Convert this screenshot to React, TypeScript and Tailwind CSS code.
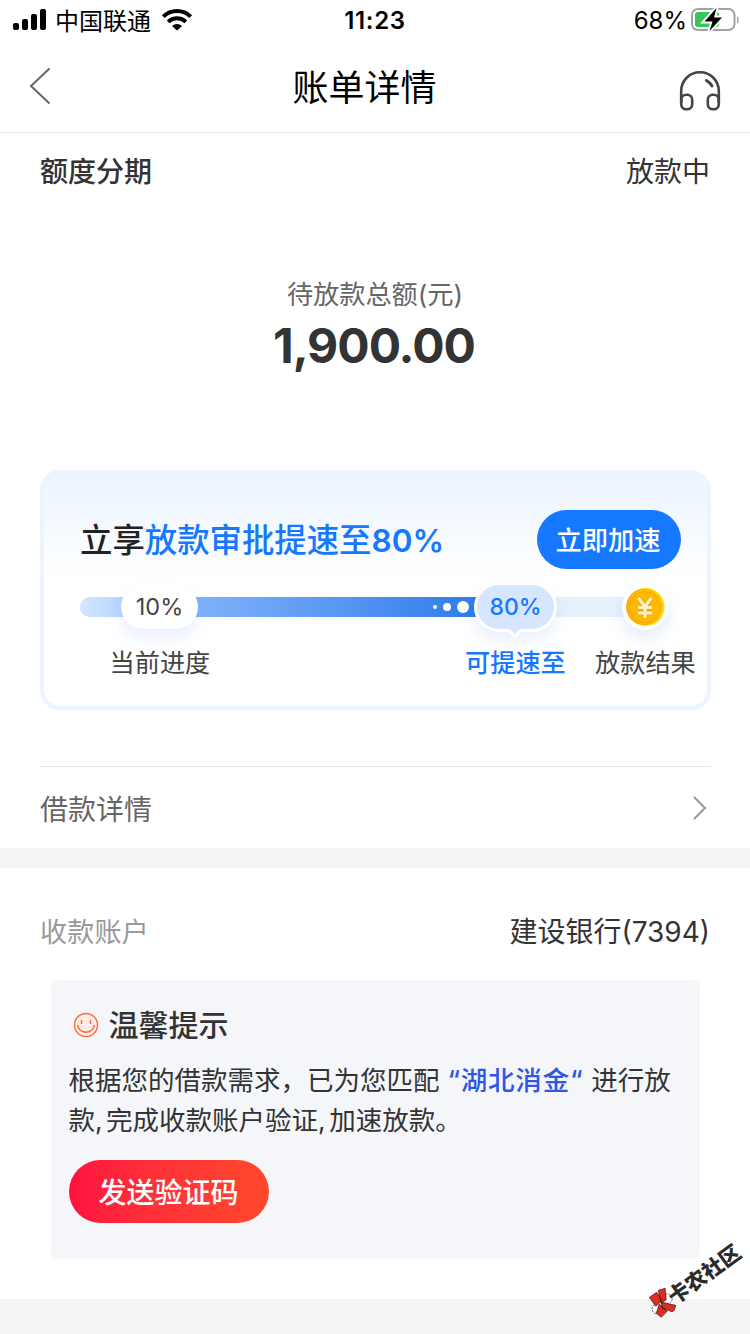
const steps = [
  { label: "当前进度", className: "left-[69.5px] text-[#444]" },
  { label: "可提速至", className: "left-[425px] font-medium text-[#1677ff]" },
  { label: "放款结果", className: "left-[555px] text-[#444]" },
];

function StatusBar() {
  return (
    <div className="flex h-10 items-center justify-between pr-2.5 pl-3 text-2xl leading-10 text-black">
      <div className="flex w-[260px] items-center">
        <svg width="34" height="22" viewBox="0 0 34 22" aria-hidden="true">
          <rect x="1" y="14" width="6" height="7" rx="2" />
          <rect x="10" y="10" width="6" height="11" rx="2" />
          <rect x="19" y="5" width="6" height="16" rx="2" />
          <rect x="28" y="0" width="6" height="21" rx="2" />
        </svg>
        <span className="ml-[9px] pt-1 leading-9">中国联通</span>
        <svg
          className="ml-2.5"
          width="32"
          height="22"
          viewBox="0 0 32 22"
          aria-hidden="true"
        >
          <path
            d="M2.3 7.6a19.5 19.5 0 0 1 27.4 0M7.2 12.9a12.5 12.5 0 0 1 17.6 0"
            fill="none"
            stroke="#000"
            strokeWidth="3.9"
          />
          <path d="M11 17a7.2 7.2 0 0 1 10 0l-5 4.5z" />
        </svg>
      </div>
      <span className="pt-0.5 pr-0.5 leading-[38px] font-semibold tracking-[0.7px]">
        11:23
      </span>
      <div className="flex w-[260px] items-center justify-end">
        <span className="pt-0.5 leading-[38px]">68%</span>
        <svg
          className="ml-1"
          width="49"
          height="28"
          viewBox="0 0 49 28"
          aria-hidden="true"
        >
          <rect
            x="1"
            y="3"
            width="42.5"
            height="21"
            rx="6"
            fill="none"
            stroke="#a3a3a3"
            strokeWidth="2"
          />
          <rect x="4" y="6" width="24" height="15" rx="3" fill="#34c759" />
          <path d="M46 10v8c2.2-1.2 2.2-6.8 0-8z" fill="#a3a3a3" />
          <path
            d="M25.5 2 13.5 15.5h8L18.5 25 31 11.5h-8z"
            stroke="#fff"
            strokeWidth="4"
            paintOrder="stroke"
          />
        </svg>
      </div>
    </div>
  );
}

function NavBar() {
  return (
    <header className="flex h-[93px] items-center border-b border-[#e6e6e6] pr-[27px] pl-7">
      <div className="w-[150px]">
        <svg
          width="44"
          height="40"
          viewBox="0 0 44 40"
          fill="none"
          stroke="#666"
          strokeWidth="2"
          aria-hidden="true"
        >
          <path d="M21.5 2.5 3 20 21.5 37.5" />
        </svg>
      </div>
      <h1 className="flex-1 pt-1 pr-[22px] text-center text-4xl leading-[50px] text-black">
        账单详情
      </h1>
      <div className="flex w-[150px] justify-end">
        <svg
          className="mt-2.5"
          width="46"
          height="44"
          viewBox="0 0 46 44"
          fill="none"
          stroke="#444"
          strokeWidth="2.6"
          strokeLinecap="round"
          aria-hidden="true"
        >
          <path d="M4.2 33V22C4.2 11.5 12.5 3.3 23 3.3S41.8 11.5 41.8 22v11" />
          <rect x="4.2" y="25.8" width="11" height="14.5" rx="5" />
          <rect x="30.8" y="25.8" width="11" height="14.5" rx="5" />
          <path d="M29.5 11.5q3.5 2 5.5 5.5" strokeWidth="3" />
        </svg>
      </div>
    </header>
  );
}

function Coin() {
  return (
    <svg width="40" height="40" viewBox="0 0 40 40" aria-hidden="true">
      <circle cx="20.5" cy="20" r="19" fill="#ffd900" />
      <circle cx="19" cy="20" r="18" fill="#fbaf12" />
      <circle cx="20" cy="19.5" r="16.5" fill="#ffc400" />
      <circle
        cx="20"
        cy="20"
        r="15.5"
        fill="#ffb900"
        stroke="#f8a500"
        strokeWidth="1"
      />
      <path
        d="M13.5 11.5l6.5 8 6.5-8M20 19.5V31M13 21h14M13 26h14"
        fill="none"
        stroke="#f79a10"
        strokeWidth="4.5"
      />
      <path
        d="M13.5 11l6.5 8.5 6.5-8.5M20 19.5V31M13 20.5h14M13 26h14"
        fill="none"
        stroke="#fff1c4"
        strokeWidth="3.2"
      />
    </svg>
  );
}

function Progress() {
  return (
    <div className="relative mt-7 mr-[62px] h-5 rounded-l-full bg-[#e6f1fe]">
      <div className="flex h-5 w-[400px] items-center justify-end gap-1.5 rounded-l-full bg-linear-to-r from-[#d6e6fd] via-[#7fb1fb] via-30% to-[#2b7bea] pr-[11px]">
        <i className="size-1 rounded-full bg-white" />
        <i className="size-2 rounded-full bg-white" />
        <i className="size-3 rounded-full bg-white" />
      </div>
      <div className="absolute -top-3 left-[41px] h-11 w-[77px] rounded-full bg-white text-center text-[23.5px] leading-11 text-[#444] shadow-[0_8px_16px_rgba(60,110,255,0.11)]">
        10%
      </div>
      <div className="absolute -top-[15px] left-[394px] h-[50px] w-[83px] rounded-full border-3 border-white bg-[#d6e6ff] text-center text-[23px] leading-11 font-medium text-[#1677ff] shadow-[0_8px_16px_rgba(60,110,255,0.11)]">
        80%
        <svg
          className="absolute top-[43px] left-[29px]"
          width="18"
          height="12"
          viewBox="0 0 18 12"
          aria-hidden="true"
        >
          <path d="M0 2h18L9 11z" fill="#fff" />
          <path d="M3 0h12L9 6z" fill="#d6e6ff" />
        </svg>
      </div>
      <div className="absolute -top-[13px] left-[542px] grid size-[46px] place-items-center rounded-full bg-white shadow-[0_8px_16px_rgba(60,110,255,0.13)]">
        <Coin />
      </div>
    </div>
  );
}

function SpeedCard() {
  return (
    <section className="mx-10 mt-[97px] h-60 w-[671px] rounded-[20px] border-4 border-[#ebf4ff] bg-linear-to-b from-[#ebf4ff] to-white to-45% pt-9 pl-9">
      <div className="flex h-[59px] items-center justify-between pr-[26px]">
        <h2 className="pt-0.5 text-[32.4px] leading-[46px] font-medium whitespace-nowrap text-[#222]">
          立享
          <span className="text-[#1677ff]">
            放款审批提速至
            <span className="text-[31.5px] font-semibold">80%</span>
          </span>
        </h2>
        <button
          className="h-[59px] w-36 rounded-full bg-[#1677ff] pt-[3px] pr-0.5 text-[26.3px] font-medium text-white"
          type="button"
        >
          立即加速
        </button>
      </div>
      <Progress />
      <div className="relative mt-7 -ml-10 h-9 text-[25.2px] leading-9">
        {steps.map((step) => (
          <span
            className={`absolute whitespace-nowrap ${step.className}`}
            key={step.label}
          >
            {step.label}
          </span>
        ))}
      </div>
    </section>
  );
}

function Tips() {
  return (
    <section className="mt-[29px] ml-[51px] h-[279px] w-[649px] rounded-lg bg-[#f4f6fa] pt-6 pl-[17.5px] text-[#333]">
      <div className="flex h-[42px] items-center">
        <svg
          className="ml-1"
          width="26"
          height="26"
          viewBox="0 0 26 26"
          fill="none"
          stroke="#ff6b35"
          aria-hidden="true"
        >
          <circle cx="13" cy="13" r="11.5" fill="#ffeee8" strokeWidth="1.4" />
          <path
            d="M8.5 8v4M17.5 8v4M4.5 13c2 9.5 15 9.5 17 0"
            strokeWidth="1.5"
          />
        </svg>
        <h2 className="ml-2.5 text-3xl leading-[42px] font-medium">
          温馨提示
        </h2>
      </div>
      <p className="mt-3.5 text-[26.5px] leading-10 whitespace-nowrap">
        根据您的借款需求，已为您匹配
        <b className="font-medium tracking-[0.8px] text-[#2f56e4]">
          {" "}
          “湖北消金“{" "}
        </b>
        进行放
        <br />
        <span className="[word-spacing:-4px]">
          款, 完成收款账户验证, 加速放款。
        </span>
      </p>
      <button
        className="mt-5 h-[63px] w-[200px] rounded-full bg-linear-to-r from-[#ff113f] to-[#ff482c] pt-0.5 text-[28px] font-medium text-white"
        type="button"
      >
        发送验证码
      </button>
    </section>
  );
}

function Watermark() {
  return (
    <div className="absolute top-[1262px] left-[641px] flex w-[112px] -rotate-[36deg] items-center whitespace-nowrap">
      <svg
        className="shrink-0"
        width="26"
        height="26"
        viewBox="0 0 26 26"
        stroke="#111"
        strokeWidth="0.6"
        aria-hidden="true"
      >
        <g transform="rotate(36 13 13)">
          <circle cx="8" cy="18.5" r="5" fill="#fff" strokeDasharray="2 1" />
          <circle cx="18" cy="8.5" r="5" fill="#fff" strokeDasharray="2 1" />
          <path
            d="M0 7l7.500-5 5.500 8-6.500 6zM9 0L16-2l1 11.500-5 4zM12 12l14.500 3-2 7-11.500-4zM10 14l8 7-6 6-5-4z"
            fill="#e02b20"
          />
        </g>
      </svg>
      <span className="-ml-1 pt-1 text-[21px] leading-7 font-black text-[#2b2b2b]">
        卡农社区
      </span>
    </div>
  );
}

export default function App() {
  return (
    <div className="relative h-[1334px] w-[750px] overflow-hidden bg-white font-['Inter','Noto_Sans_CJK_SC',sans-serif]">
      <StatusBar />
      <NavBar />
      <main>
        <div className="flex h-[76px] items-center justify-between px-10 pt-0.5 text-[28px] leading-10 text-[#333]">
          <h2 className="font-medium">额度分期</h2>
          <span>放款中</span>
        </div>
        <div className="mt-[68px] text-center">
          <p className="text-[26.2px] leading-9 text-[#666]">待放款总额(元)</p>
          <p className="mt-1.5 pr-0.5 text-5xl leading-[54px] font-bold tracking-[-1px] text-[#333]">
            1,900.00
          </p>
        </div>
        <SpeedCard />
        <div className="mt-14 ml-10 flex h-[82px] w-[671px] items-center justify-between border-t border-[#e8e8e8] pr-1 text-[28px] leading-10 text-[#666]">
          <span className="pt-1">借款详情</span>
          <svg
            width="15"
            height="26"
            viewBox="0 0 15 26"
            fill="none"
            stroke="#999"
            strokeWidth="2"
            aria-hidden="true"
          >
            <path d="M2 2l11 11L2 24" />
          </svg>
        </div>
        <div className="h-5 bg-[#f5f5f5]" />
        <div className="flex items-center justify-between px-10 pt-[46px] text-[28px] leading-[37px] text-[#333]">
          <span className="text-[27.2px] text-[#999]">收款账户</span>
          <span>建设银行(7394)</span>
        </div>
        <Tips />
        <div className="mt-10 h-9 bg-[#f5f5f5]" />
      </main>
      <Watermark />
    </div>
  );
}
